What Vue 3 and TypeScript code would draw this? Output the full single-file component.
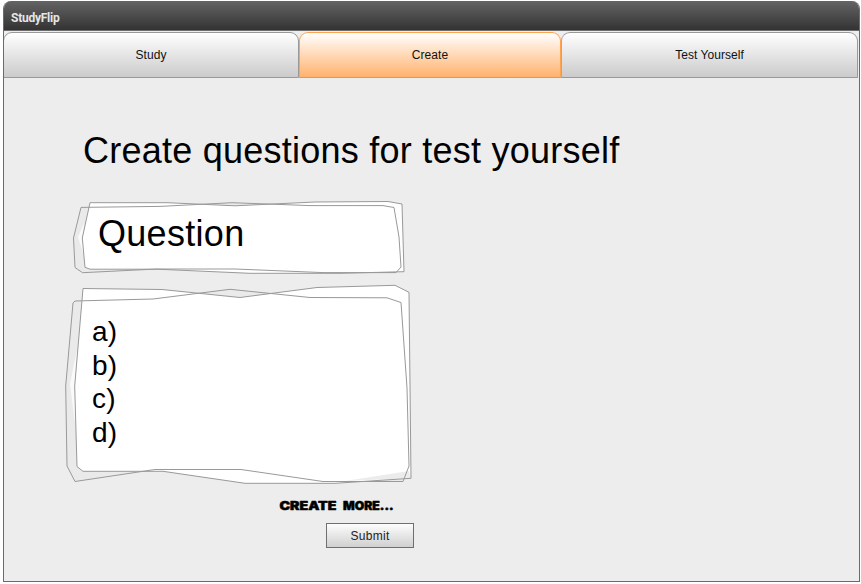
<script setup lang="ts">
import { ref } from 'vue'

interface Tab {
  label: string
  width: number
}

const tabs: Tab[] = [
  { label: 'Study', width: 296 },
  { label: 'Create', width: 262 },
  { label: 'Test Yourself', width: 297 },
]
const active = ref<string>('Create')
const answers: string[] = ['a)', 'b)', 'c)', 'd)']
</script>

<template>
  <div class="window">
    <header class="titlebar">StudyFlip</header>
    <nav class="tabs">
      <button
        v-for="tab in tabs"
        :key="tab.label"
        type="button"
        class="tab"
        :class="{ active: tab.label === active }"
        :style="{ width: tab.width + 'px' }"
        @click="active = tab.label"
      >
        {{ tab.label }}
      </button>
    </nav>
    <main class="content">
      <h1 class="heading">Create questions for test yourself</h1>

      <section class="card question">
        <svg class="sketch" viewBox="70 198 340 80" aria-hidden="true">
          <polygon class="back" points="81,207.4 160,206.4 232,202.7 310,205.6 383,205.6 394,207.5 399,237 401,267 396,272.6 323,272.6 235,269 157,269 82.5,272.7 75,267.5 73.5,238" />
          <polygon class="paper" points="90,202.7 167,202.7 235,205.8 315,202 388,201.5 402,204 404,271.7 340,273.3 250,273.3 157,269.2 90,269.2 85,267.3 82.3,238" />
          <polygon class="glow" points="84,223 82.3,238 84,256 78,237" />
          <polygon class="line" points="90,202.7 167,202.7 235,205.8 315,202 388,201.5 402,204 404,271.7 340,273.3 250,273.3 157,269.2 90,269.2 85,267.3 82.3,238" />
          <polygon class="line" points="81,207.4 160,206.4 232,202.7 310,205.6 383,205.6 394,207.5 399,237 401,267 396,272.6 323,272.6 235,269 157,269 82.5,272.7 75,267.5 73.5,238" />
        </svg>
        <span class="question-text">Question</span>
      </section>

      <section class="card answers">
        <svg class="sketch" viewBox="60 280 360 208" aria-hidden="true">
          <polygon class="back" points="73,303 75,301 153,299 230,289.3 310,297.5 387,297.8 401,302.5 407,388 409,466 403,481.5 323,481.5 241,469.5 155,469.5 75,481.5 67,466 65.7,386" />
          <polygon class="paper" points="83,288.5 162,289.5 240,297.5 317,287.5 395,285.3 409,292.3 411,478.3 335,483.3 245,483.3 163,471.3 83,471.3 77,466.5 74.7,386" />
          <polygon class="glow" points="78,345 74.7,386 76,432 70,384" />
          <polygon class="shade" points="345,481 409,471 411,478.3" />
          <polygon class="line" points="83,288.5 162,289.5 240,297.5 317,287.5 395,285.3 409,292.3 411,478.3 335,483.3 245,483.3 163,471.3 83,471.3 77,466.5 74.7,386" />
          <polygon class="line" points="73,303 75,301 153,299 230,289.3 310,297.5 387,297.8 401,302.5 407,388 409,466 403,481.5 323,481.5 241,469.5 155,469.5 75,481.5 67,466 65.7,386" />
        </svg>
        <ul class="answer-list">
          <li v-for="answer in answers" :key="answer">{{ answer }}</li>
        </ul>
      </section>

      <footer class="actions">
        <svg class="more" viewBox="0 0 116 16" role="button">
          <text x="0.5" y="12.2" textLength="57" lengthAdjust="spacingAndGlyphs">CREATE</text>
          <text x="64" y="12.2" textLength="50.5" lengthAdjust="spacingAndGlyphs">MORE...</text>
        </svg>
        <button type="button" class="submit">Submit</button>
      </footer>
    </main>
  </div>
</template>

<style>
body {
  margin: 0;
  background: #fff;
}
</style>

<style scoped>
.window {
  box-sizing: border-box;
  width: 857px;
  height: 581px;
  margin: 1px 0 0 3px;
  border: 1px solid #6b6b6b;
  border-top: 0;
  border-radius: 8px 8px 0 0;
  background: #ededed;
  overflow: hidden;
  font-family: 'Liberation Sans', Arial, sans-serif;
  color: #000;
}
.titlebar {
  box-sizing: border-box;
  height: 30px;
  margin: 0 -1px;
  padding-left: 8px;
  background: linear-gradient(#646464, #333);
  border-bottom: 1px solid #6c6c6c;
  color: #e6e6e6;
  font: bold 12px/34px Roboto, sans-serif;
  letter-spacing: -0.25px;
}
.tabs {
  display: flex;
  height: 47px;
  margin-left: -1px;
  padding-top: 1px;
  box-sizing: border-box;
}
.tab {
  box-sizing: border-box;
  flex: none;
  height: 46px;
  margin: 0;
  padding: 0 0 1px;
  border: 1px solid #999;
  border-radius: 9px 9px 0 0;
  background: linear-gradient(#fff, #cbcbcb);
  font: 12px 'Liberation Sans', Arial, sans-serif;
  letter-spacing: 0.05px;
  color: #111;
}
.tab + .tab {
  border-left-color: #aaa;
}
.tab.active {
  border-color: #ffa34f;
  border-bottom-color: #e39553;
  background: linear-gradient(#fff, #ffb26c);
}
.content {
  padding: 51px 0 0 80px;
}
.heading {
  margin: 0 0 0 -1px;
  height: 44px;
  font-size: 36px;
  line-height: 44px;
  font-weight: 400;
  letter-spacing: 0.24px;
  white-space: nowrap;
}
.card {
  display: grid;
}
.card > * {
  grid-area: 1 / 1;
}
.question {
  width: 340px;
  height: 80px;
  margin: 25px 0 0 -14px;
}
.answers {
  width: 360px;
  height: 208px;
  margin: 2px 0 0 -24px;
}
.sketch {
  display: block;
  width: 100%;
  height: 100%;
}
.back {
  fill: #eaeaea;
}
.paper {
  fill: #fff;
}
.glow {
  fill: #fafafa;
}
.shade {
  fill: #ececec;
}
.line {
  fill: none;
  stroke: #999;
  stroke-width: 1;
}
.question-text {
  padding: 16px 0 0 28px;
  font-size: 36px;
  line-height: 40px;
  letter-spacing: 0.3px;
}
.answer-list {
  list-style: none;
  margin: 0;
  padding: 35px 0 0 32px;
  font-size: 28px;
  line-height: 33.7px;
  letter-spacing: 0.3px;
}
.actions {
  display: flex;
  flex-direction: column;
  width: 330px;
  align-items: flex-end;
}
.more {
  display: block;
  width: 116px;
  height: 16px;
  margin: 10px 19px 0 0;
}
.more text {
  font: 900 11.5px Inter, 'DejaVu Sans', sans-serif;
  stroke: #000;
  stroke-width: 0.5;
  stroke-linejoin: round;
}
.submit {
  box-sizing: border-box;
  width: 88px;
  height: 25px;
  margin-top: 9px;
  padding: 0;
  border: 1px solid #6f6f6f;
  background: linear-gradient(#fdfdfd, #d0d0d0);
  font: 12px 'Liberation Sans', Arial, sans-serif;
  letter-spacing: 0.3px;
  color: #222;
}
</style>
